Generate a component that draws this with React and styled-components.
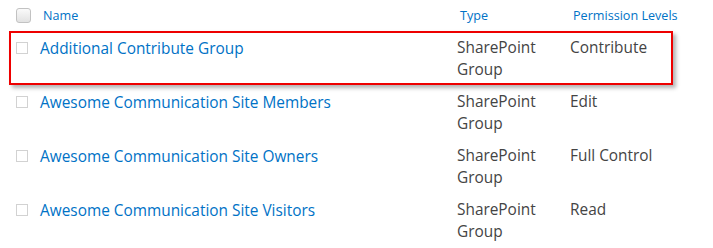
import styled, { createGlobalStyle } from 'styled-components'

const GlobalStyle = createGlobalStyle`
body {
  margin: 0;
  background: #fff;
  font-family: 'Open Sans', 'Noto Sans', sans-serif;
}
`

const groups = [
  { name: 'Additional Contribute Group', type: 'SharePoint Group', level: 'Contribute', highlighted: true },
  { name: 'Awesome Communication Site Members', type: 'SharePoint Group', level: 'Edit' },
  { name: 'Awesome Communication Site Owners', type: 'SharePoint Group', level: 'Full Control' },
  { name: 'Awesome Communication Site Visitors', type: 'SharePoint Group', level: 'Read' },
]

const Table = styled.div`
width: 713px;
height: 248px;
overflow: hidden;
padding-left: 16px;
box-sizing: border-box;
`

const Row = styled.div`
position: relative;
display: grid;
grid-template-columns: 24px 417px 113px 1fr;
align-items: start;
`

const HeaderRow = styled(Row)`
height: 33px;
align-items: center;
padding-bottom: 3px;
box-sizing: border-box;
`

const ItemRow = styled(Row)`
height: 54px;
padding-top: 4px;
box-sizing: border-box;

${p => p.$highlighted && `
&::after {
  content: '';
  position: absolute;
  left: -7px;
  top: -2px;
  width: 664px;
  height: 54px;
  box-sizing: border-box;
  border: 2px solid #ee0000;
  box-shadow: 3px 3px 4px rgba(0, 0, 0, 0.3);
  pointer-events: none;
}
`}
`

const HeadCheck = styled.span`
display: block;
width: 15px;
height: 15px;
box-sizing: border-box;
border: 1px solid #c2c2c2;
border-radius: 3px;
background: linear-gradient(#fafafa, #e2e2e2);
`

const RowCheck = styled.span`
display: block;
width: 12px;
height: 12px;
margin-top: 5px;
box-sizing: border-box;
border: 1px solid #d2d2d2;
background: #fff;
`

const HeadCell = styled.div`
padding-left: 3px;
font-size: 12.6px;
color: #0072c6;
`

const NameLink = styled.a`
font-size: 15.4px;
line-height: 22px;
color: #0072c6;
text-decoration: none;
cursor: pointer;
`

const Cell = styled.div`
font-size: 15.4px;
line-height: 22px;
color: #444;
padding-right: 10px;
`

export default function App() {
  return (
    <>
      <GlobalStyle />
      <Table>
        <HeaderRow>
          <HeadCheck />
          <HeadCell>Name</HeadCell>
          <HeadCell>Type</HeadCell>
          <HeadCell>Permission Levels</HeadCell>
        </HeaderRow>
        {groups.map(g => (
          <ItemRow key={g.name} $highlighted={g.highlighted}>
            <RowCheck />
            <div><NameLink>{g.name}</NameLink></div>
            <Cell>{g.type}</Cell>
            <Cell>{g.level}</Cell>
          </ItemRow>
        ))}
      </Table>
    </>
  )
}
